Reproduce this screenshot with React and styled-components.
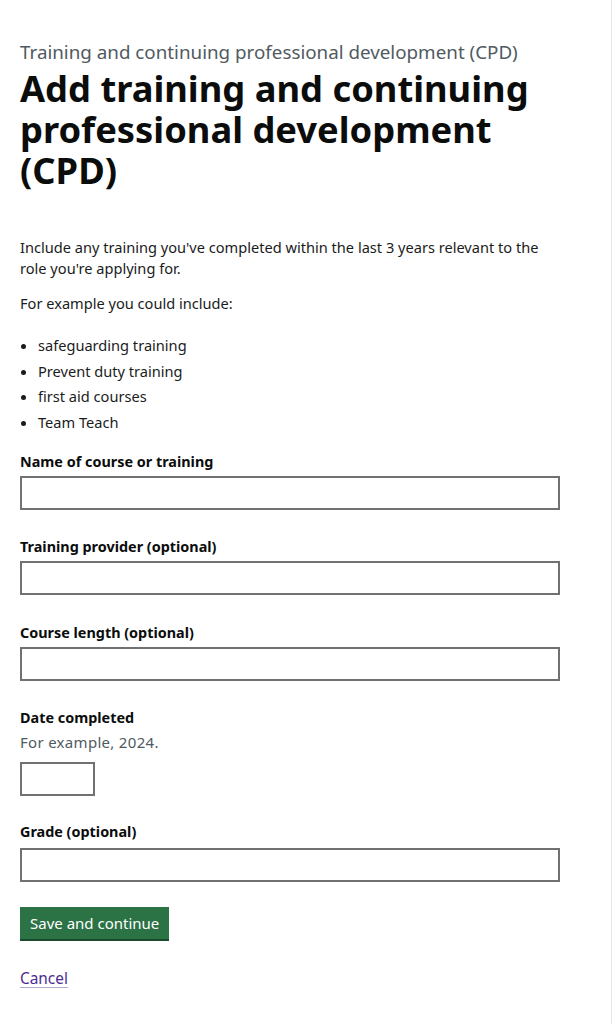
import React from 'react'
import styled, { createGlobalStyle } from 'styled-components'

const GlobalStyle = createGlobalStyle`
  * { box-sizing: border-box; }
  body {
    margin: 0;
    background: #ffffff;
    font-family: "Noto Sans", "Liberation Sans", Arial, sans-serif;
    color: #0b0c0c;
  }
`

const Page = styled.main`
  min-height: 1024px;
  padding: 40px 52px 40px 20px;
  border-right: 1px solid #e6e6e6;
`

const Caption = styled.span`
  display: block;
  font-size: 18.8px;
  line-height: 25px;
  color: #505a5f;
  margin-bottom: 3px;
`

const Title = styled.h1`
  margin: 0 0 46px;
  font-size: 36.3px;
  line-height: 41px;
  font-weight: 700;
`

const Body = styled.p`
  margin: 0 0 ${({ $gap }) => $gap || 14}px;
  font-size: 14.6px;
  line-height: 21px;
  color: #1b1c1c;
`

const List = styled.ul`
  margin: 0 0 18px;
  padding-left: 18px;
  font-size: 14.6px;
  line-height: 21px;
  color: #1b1c1c;
`

const Item = styled.li`
  margin-bottom: 4.5px;
`

const Field = styled.div`
  margin-bottom: ${({ $gap }) => $gap || 26.5}px;
`

const Label = styled.label`
  display: block;
  font-size: 14.4px;
  line-height: 21px;
  font-weight: 700;
  margin-bottom: ${({ $gap }) => ($gap === undefined ? 4 : $gap)}px;
`

const Hint = styled.div`
  font-size: 15px;
  line-height: 21px;
  letter-spacing: 0.3px;
  color: #505a5f;
  margin-bottom: 9px;
`

const Input = styled.input`
  display: block;
  width: ${({ $width }) => $width || '540px'};
  height: 34px;
  border: 2px solid #6f7173;
  background: #fff;
  padding: 4px;
  font: inherit;
  font-size: 15px;
  outline: none;
`

const Button = styled.button`
  display: block;
  margin: 0 0 28px;
  padding: 6px 10px;
  height: 32px;
  border: none;
  background: #2b7245;
  box-shadow: 0 2px 0 #1a4a2b;
  color: #ffffff;
  font: inherit;
  font-size: 15px;
  line-height: 20px;
  cursor: pointer;
`

const Link = styled.a`
  font-size: 15.4px;
  line-height: 21px;
  color: #4c2c92;
  text-decoration: underline;
  text-underline-offset: 3px;
  text-decoration-color: #b3a8d0;
`

const App = () => {
  return (
    <>
      <GlobalStyle />
      <Page>
        <Caption>Training and continuing professional development (CPD)</Caption>
        <Title>Add training and continuing professional development (CPD)</Title>
        <Body>
          Include any training you've completed within the last 3 years relevant to the
          role you're applying for.
        </Body>
        <Body $gap={21}>For example you could include:</Body>
        <List>
          <Item>safeguarding training</Item>
          <Item>Prevent duty training</Item>
          <Item>first aid courses</Item>
          <Item>Team Teach</Item>
        </List>
        <Field>
          <Label htmlFor="name">Name of course or training</Label>
          <Input id="name" type="text" />
        </Field>
        <Field>
          <Label htmlFor="provider">Training provider (optional)</Label>
          <Input id="provider" type="text" />
        </Field>
        <Field>
          <Label htmlFor="length">Course length (optional)</Label>
          <Input id="length" type="text" />
        </Field>
        <Field $gap={24.5}>
          <Label htmlFor="year" $gap={4}>Date completed</Label>
          <Hint>For example, 2024.</Hint>
          <Input id="year" type="text" $width="75px" />
        </Field>
        <Field $gap={25}>
          <Label htmlFor="grade" $gap={6.5}>Grade (optional)</Label>
          <Input id="grade" type="text" />
        </Field>
        <Button type="submit">Save and continue</Button>
        <Link href="#">Cancel</Link>
      </Page>
    </>
  )
}

export default App
